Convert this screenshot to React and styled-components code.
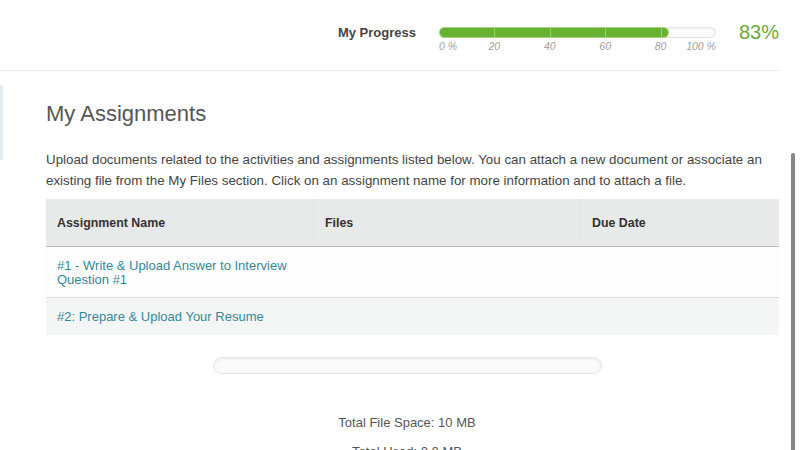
import React from "react";
import styled, { createGlobalStyle } from "styled-components";

const Global = createGlobalStyle`
  html, body { margin: 0; padding: 0; background: #fff; }
  body { font-family: "Liberation Sans", Arial, Helvetica, sans-serif; color: #444; overflow: hidden; }
  * { box-sizing: border-box; }
`;

const Page = styled.div`
  display: flex;
  width: 800px;
  height: 450px;
  overflow: hidden;
`;

const Main = styled.div`
  width: 780px;
  flex: none;
  display: flex;
  flex-direction: column;
`;

const Gutter = styled.div`
  flex: 1;
  padding: 153px 0 0 11px;
  display: flex;
`;

const Thumb = styled.div`
  width: 4px;
  height: 320px;
  border-radius: 2px;
  background: #858585;
`;

const Header = styled.header`
  height: 71px;
  border-bottom: 1px solid #ececec;
  display: flex;
  align-items: center;
  justify-content: flex-end;
  padding: 0 1px 6px 0;
  flex: none;
`;

const ProgressLabel = styled.div`
  font-size: 13px;
  font-weight: bold;
  color: #444;
  margin-right: 23px;
`;

const ProgressGroup = styled.div`
  width: 277px;
  padding-top: 14px;
  display: flex;
  flex-direction: column;
  gap: 2px;
`;

const Track = styled.div`
  position: relative;
  height: 11px;
  border-radius: 6px;
  border: 1px solid #e4e4e4;
  background: #fbfbfb;
  box-shadow: inset 0 1px 2px rgba(0, 0, 0, 0.06);
`;

const Fill = styled.div`
  height: 100%;
  border-radius: 6px;
  background: #68b232;
  box-shadow: 0 0 0 1px #a3d37f;
  display: grid;
  grid-template-columns: repeat(4, 55.4px) 1fr;
`;

const Seg = styled.span`
  border-right: 1px solid rgba(255, 255, 255, 0.35);
`;

const Scale = styled.div`
  position: relative;
  height: 12px;
  font-size: 10.5px;
  font-style: italic;
  color: #a0a0a0;
  line-height: 12px;
`;

const Tick = styled.span`
  position: absolute;
  top: 0;
  white-space: nowrap;
  transform: ${(p) => (p.$edge === "start" ? "none" : p.$edge === "end" ? "translateX(-100%)" : "translateX(-50%)")};
`;

const Percent = styled.div`
  font-size: 20px;
  color: #6aa93c;
  margin-left: 23px;
  line-height: 24px;
`;

const Body = styled.div`
  display: flex;
  flex: 1;
`;

const SideStrip = styled.div`
  width: 3px;
  height: 75px;
  margin-top: 14px;
  background: #e3edf1;
  flex: none;
`;

const Content = styled.main`
  flex: 1;
  padding: 30px 0 0 43px;
`;

const Title = styled.h1`
  margin: 0;
  font-size: 22px;
  line-height: 26px;
  font-weight: normal;
  color: #555;
`;

const Intro = styled.p`
  margin: 22px 0 8px;
  font-size: 13.35px;
  line-height: 21px;
  color: #444;
`;

const Table = styled.div`
  width: 733px;
`;

const Row = styled.div`
  display: grid;
  grid-template-columns: 267px 267px 1fr;
  min-height: ${(p) => p.$minH || 0}px;
  background: ${(p) => p.$bg || "#fff"};
  border-bottom: 1px solid ${(p) => p.$line || "#dcdcdc"};
`;

const HeadCell = styled.div`
  height: 47px;
  display: flex;
  align-items: center;
  padding: 1px 11px 0;
  font-size: 12.4px;
  font-weight: bold;
  color: #333;
  border-left: ${(p) => (p.$first ? "none" : "1px solid #e4e5e5")};
`;

const Cell = styled.div`
  display: flex;
  align-items: center;
  padding: 12px 11px 10px;
  font-size: 13px;
  line-height: 14px;
`;

const Link = styled.a`
  color: #33899a;
  text-decoration: none;
`;

const Storage = styled.section`
  display: flex;
  flex-direction: column;
  align-items: center;
  padding-right: 12px;
  padding-top: 22px;
`;

const StorageBar = styled.div`
  width: 389px;
  height: 17px;
  border-radius: 9px;
  border: 1px solid #e4e4e4;
  background: #fafafa;
  box-shadow: inset 0 1px 3px rgba(0, 0, 0, 0.07);
`;

const StorageText = styled.div`
  font-size: 13px;
  line-height: 20px;
  color: #555;
  margin-top: ${(p) => p.$mt}px;
`;

const ticks = [
  { v: 0, t: "0 %", edge: "start" },
  { v: 20, t: "20" },
  { v: 40, t: "40" },
  { v: 60, t: "60" },
  { v: 80, t: "80" },
  { v: 100, t: "100 %", edge: "end" },
];

export default function App() {
  const progress = 83;
  return (
    <>
      <Global />
      <Page>
        <Main>
          <Header>
            <ProgressLabel>My Progress</ProgressLabel>
            <ProgressGroup>
              <Track>
                <Fill style={{ width: `${progress}%` }}>
                  <Seg />
                  <Seg />
                  <Seg />
                  <Seg />
                  <span />
                </Fill>
              </Track>
              <Scale>
                {ticks.map((k) => (
                  <Tick key={k.v} $edge={k.edge} style={{ left: `${k.v}%` }}>
                    {k.t}
                  </Tick>
                ))}
              </Scale>
            </ProgressGroup>
            <Percent>{progress}%</Percent>
          </Header>
          <Body>
            <SideStrip />
            <Content>
              <Title>My Assignments</Title>
              <Intro>
                Upload documents related to the activities and assignments listed below. You can attach a new
                document or associate an existing file from the My Files section. Click on an assignment name for
                more information and to attach a file.
              </Intro>
              <Table>
                <Row $bg="#e8e9e9" $line="#bababa">
                  <HeadCell $first>Assignment Name</HeadCell>
                  <HeadCell>Files</HeadCell>
                  <HeadCell>Due Date</HeadCell>
                </Row>
                <Row $bg="#fdfdfd" $minH={50}>
                  <Cell>
                    <Link href="#">#1 - Write &amp; Upload Answer to Interview Question #1</Link>
                  </Cell>
                  <Cell />
                  <Cell />
                </Row>
                <Row $bg="#f4f5f5" $line="transparent" $minH={37}>
                  <Cell>
                    <Link href="#">#2: Prepare &amp; Upload Your Resume</Link>
                  </Cell>
                  <Cell />
                  <Cell />
                </Row>
              </Table>
              <Storage>
                <StorageBar />
                <StorageText $mt={39}>Total File Space: 10 MB</StorageText>
                <StorageText $mt={9}>Total Used: 0.0 MB</StorageText>
              </Storage>
            </Content>
          </Body>
        </Main>
        <Gutter>
          <Thumb />
        </Gutter>
      </Page>
    </>
  );
}
